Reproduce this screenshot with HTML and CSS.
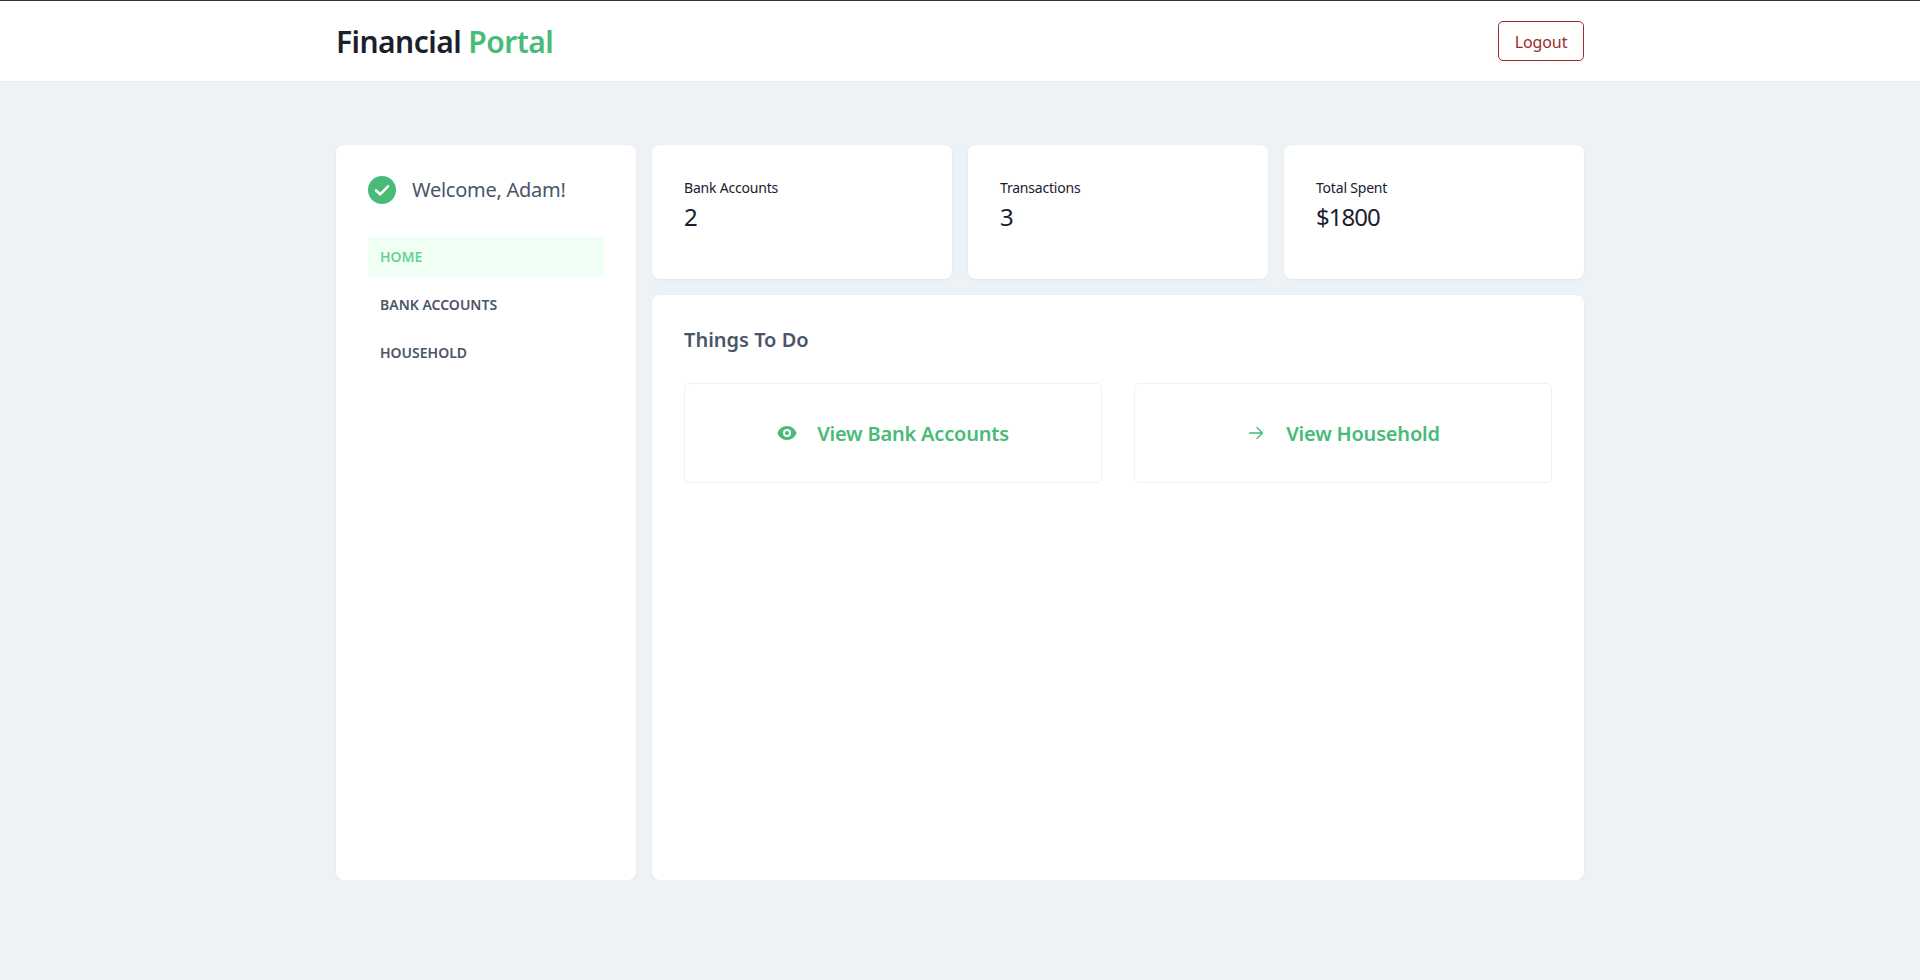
FILE: index.html
```html
<!DOCTYPE html>
<html lang="en">
<head>
  <meta charset="UTF-8" />
  <meta name="viewport" content="width=device-width, initial-scale=1.0"/>
  <title>Financial Portal</title>
  <link rel="stylesheet" href="styles.css">
</head>
<body>

<div class="navbar">
  <div class="navbar-inner">
    <h1 class="brand">Financial <span>Portal</span></h1>
    <button class="logout-btn">Logout</button>
  </div>
</div>

<div class="container">
  <div class="sidebar card">
    <div class="welcome">
      <svg class="welcome-icon" viewBox="0 0 28 28" width="28" height="28">
        <circle cx="14" cy="14" r="14" fill="#48bb78"/>
        <path d="M8 14.5l4.2 3.8 7.8-8" fill="none" stroke="#fff" stroke-width="2.6" stroke-linecap="round" stroke-linejoin="round"/>
      </svg>
      <span>Welcome, Adam!</span>
    </div>
    <nav class="side-nav">
      <a class="active" href="#">HOME</a>
      <a href="#">BANK ACCOUNTS</a>
      <a href="#">HOUSEHOLD</a>
    </nav>
  </div>

  <div class="stat card">
    <div class="stat-label">Bank Accounts</div>
    <div class="stat-value">2</div>
  </div>
  <div class="stat card">
    <div class="stat-label">Transactions</div>
    <div class="stat-value">3</div>
  </div>
  <div class="stat card">
    <div class="stat-label">Total Spent</div>
    <div class="stat-value">$1800</div>
  </div>

  <div class="todo card">
    <h3>Things To Do</h3>
    <div class="todo-grid">
      <a class="todo-link" href="#">
        <svg viewBox="0 0 20 20" width="20" height="20" fill="#48bb78">
          <path d="M10 12a2 2 0 1 0 0-4 2 2 0 0 0 0 4z"/>
          <path fill-rule="evenodd" clip-rule="evenodd" d="M.458 10C1.732 5.943 5.522 3 10 3s8.268 2.943 9.542 7c-1.274 4.057-5.064 7-9.542 7S1.732 14.057.458 10zM14 10a4 4 0 1 1-8 0 4 4 0 0 1 8 0z"/>
        </svg>
        <span>View Bank Accounts</span>
      </a>
      <a class="todo-link" href="#">
        <svg viewBox="0 0 20 20" width="20" height="20" fill="none" stroke="#48bb78" stroke-width="1.4" stroke-linecap="round" stroke-linejoin="round">
          <path d="M3.5 10h13M11 4.5l5.5 5.5-5.5 5.5"/>
        </svg>
        <span>View Household</span>
      </a>
    </div>
  </div>
</div>

</body>
</html>
```

FILE: styles.css
```css
body {
  margin: 0;
  font-family: "Noto Sans", "Open Sans", sans-serif;
  background: #edf2f7;
  color: #1a202c;
}

.navbar {
  background: #fff;
  border-top: 1px solid #2d3139;
  border-bottom: 1px solid #e2e8f0;
  box-sizing: border-box;
  height: 82px;
}

.navbar-inner {
  width: 1248px;
  height: 100%;
  margin: auto;
  display: flex;
  justify-content: space-between;
  align-items: center;
}

.brand {
  margin: 2px 0 0;
  font-size: 30px;
  font-weight: 600;
  line-height: 36px;
  letter-spacing: -0.55px;
}

.brand span {
  color: #48bb78;
}

.logout-btn {
  width: 86px;
  height: 40px;
  background: #fff;
  color: #9b2c2c;
  border: 1px solid #9b2c2c;
  border-radius: 5px;
  font-family: inherit;
  font-size: 16px;
  letter-spacing: -0.1px;
  padding: 2px 0 0;
}

.container {
  width: 1248px;
  height: 735px;
  margin: 63px auto 0;
  display: grid;
  grid-template-columns: repeat(4, 300px);
  grid-template-rows: 134px 1fr;
  gap: 16px;
}

.card {
  background: #fff;
  border-radius: 8px;
  box-shadow: 0 1px 3px rgba(0,0,0,0.05);
}

.sidebar {
  grid-row: 1 / 3;
  padding: 32px;
}

.welcome {
  display: flex;
  align-items: center;
  gap: 16px;
  height: 28px;
  margin-top: -1px;
  font-size: 20px;
  letter-spacing: -0.26px;
  color: #4a5568;
}

.welcome span {
  margin-top: -1px;
}

.welcome-icon {
  flex-shrink: 0;
}

.side-nav {
  margin-top: 33px;
  display: flex;
  flex-direction: column;
  gap: 8px;
}

.side-nav a {
  display: block;
  height: 40px;
  line-height: 40px;
  padding: 0 12px;
  font-size: 14px;
  font-weight: 600;
  color: #4a5568;
  text-decoration: none;
}

.side-nav a.active {
  background: #f0fff4;
  color: #68d391;
}

.stat {
  padding: 32px;
}

.stat-label {
  font-size: 14px;
  line-height: 20px;
  margin-top: 1px;
  letter-spacing: -0.2px;
}

.stat-value {
  font-size: 24px;
  line-height: 32px;
  margin-top: 3px;
  letter-spacing: -1px;
}

.todo {
  grid-column: 2 / 5;
  padding: 32px;
}

.todo h3 {
  margin: -1px 0 0;
  font-size: 20px;
  font-weight: 600;
  line-height: 28px;
  color: #4a5568;
}

.todo-grid {
  margin-top: 29px;
  display: grid;
  grid-template-columns: 1fr 1fr;
  gap: 32px;
}

.todo-link {
  height: 100px;
  display: flex;
  align-items: center;
  justify-content: center;
  gap: 20px;
  border: 1px solid #edf2f7;
  border-radius: 5px;
  box-sizing: border-box;
  font-size: 20px;
  font-weight: 600;
  letter-spacing: -0.2px;
  color: #48bb78;
  text-decoration: none;
}
```
